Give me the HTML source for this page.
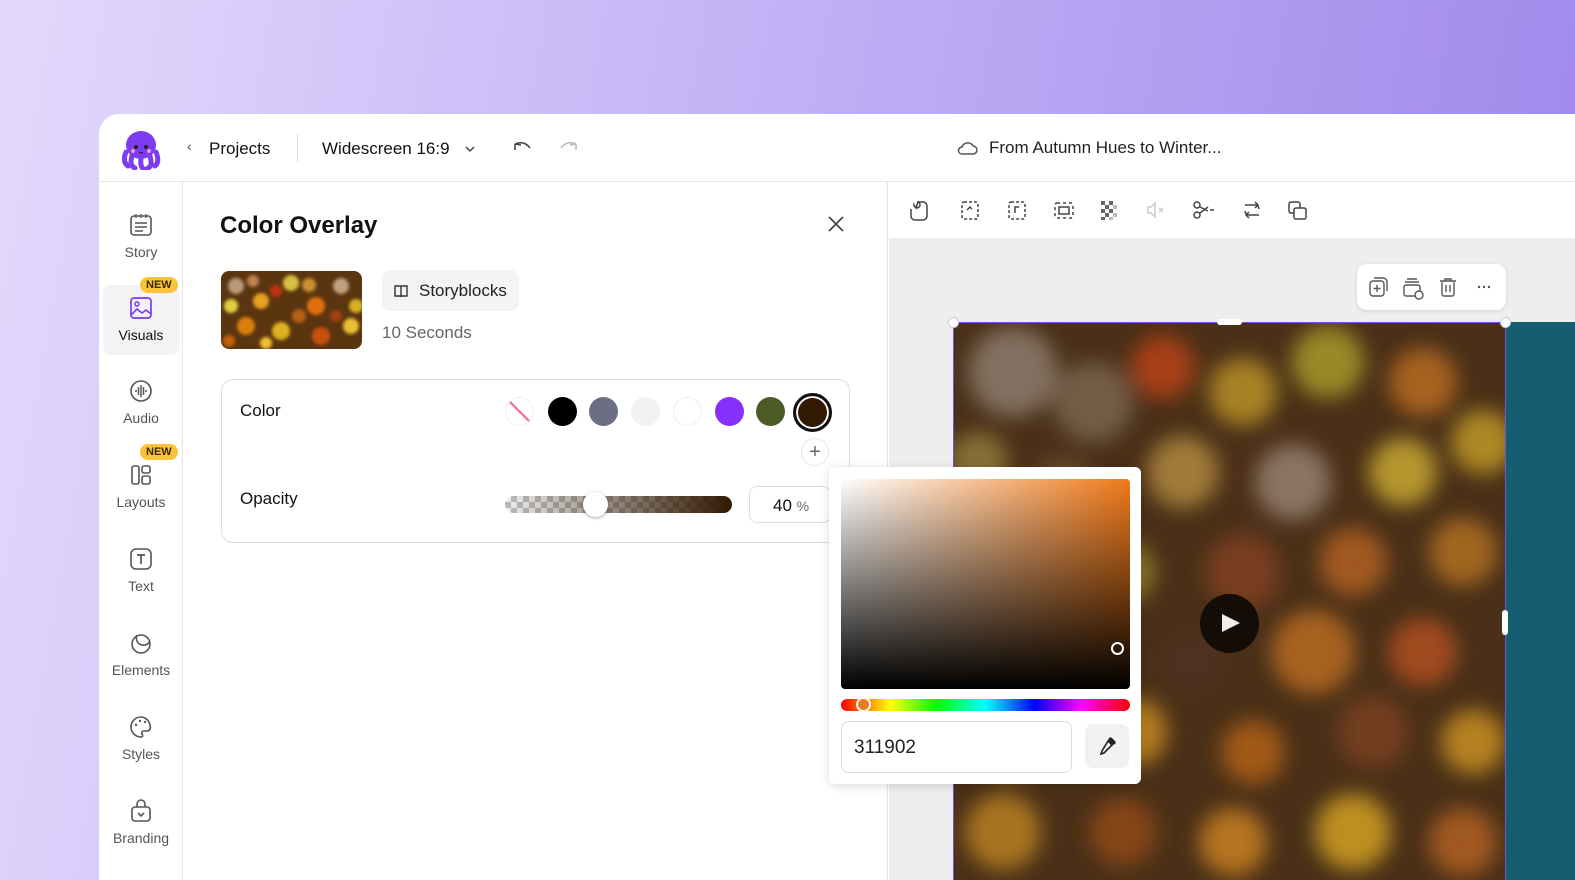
<!DOCTYPE html>
<html style="width:1575px;height:880px;overflow:hidden"><head><meta charset="utf-8"><style>
*{box-sizing:border-box;margin:0;padding:0}
body{width:1575px;height:880px;overflow:hidden;font-family:"Liberation Sans",sans-serif;background:linear-gradient(100deg,#e3d9fc 0%,#c6b6f6 40%,#9c84ea 100%);position:relative;color:#111}
.app{position:absolute;left:99px;top:114px;width:1476px;height:766px;background:#fff;border-radius:20px 0 0 0;overflow:hidden}
.hdr{position:absolute;left:0;top:0;right:0;height:68px;border-bottom:1px solid #e6e6e6}
.side{position:absolute;left:0;top:68px;width:84px;bottom:0;border-right:1px solid #e8e8e8}
.nav{position:absolute;left:4px;width:76px;text-align:center;font-size:14px;color:#555}
.nav svg{display:block;margin:0 auto 6px}
.new{position:absolute;background:#fbc33a;color:#3a2a00;font-size:11px;font-weight:bold;border-radius:9px;padding:2px 6px}
.abs{position:absolute}
.sw{position:absolute;top:397px;width:29px;height:29px;border-radius:50%}
</style></head><body>
<div class="app">
 <div class="hdr">
  <svg class="abs" style="left:21px;top:14px" width="42" height="42" viewBox="0 0 42 42"><ellipse cx="21" cy="17" rx="15" ry="14" fill="#7d3cf0"/><path d="M6 24 Q2 34 8 38 M12 28 Q9 38 15 40 M21 30 Q20 40 24 41 M30 28 Q33 38 28 40 M36 24 Q40 34 35 38" stroke="#7d3cf0" stroke-width="5" fill="none" stroke-linecap="round"/><circle cx="16" cy="19" r="2" fill="#222"/><circle cx="26" cy="19" r="2" fill="#222"/><circle cx="13" cy="23" r="2" fill="#f09ac0"/><circle cx="29" cy="23" r="2" fill="#f09ac0"/><path d="M19 24 q2 2 4 0" stroke="#222" fill="none"/></svg>
  <div class="abs" style="left:88px;top:24px;font-size:14px;color:#444">‹</div>
  <div class="abs" style="left:110px;top:25px;font-size:17px;font-weight:500">Projects</div>
  <div class="abs" style="left:198px;top:20px;width:1px;height:28px;background:#ddd"></div>
  <div class="abs" style="left:223px;top:25px;font-size:17px;font-weight:500">Widescreen 16:9</div>
  <svg class="abs" style="left:365px;top:29px" width="12" height="12"><path d="M2 4l4 4 4-4" stroke="#444" fill="none" stroke-width="1.5"/></svg>
  <svg class="abs" style="left:411px;top:24px" width="24" height="20"><path d="M5 6 Q14 2 20 10 M5 6 l0 6 M5 6 l6 1" stroke="#444" stroke-width="1.6" fill="none"/></svg>
  <svg class="abs" style="left:458px;top:24px" width="24" height="20"><path d="M19 6 Q10 2 4 10 M19 6 l0 6 M19 6 l-6 1" stroke="#bbb" stroke-width="1.6" fill="none"/></svg>
  <svg class="abs" style="left:857px;top:25px" width="22" height="18"><path d="M6 15 h11 a4 4 0 0 0 0-8 a6 6 0 0 0-11 1 a3.5 3.5 0 0 0 0 7z" stroke="#555" stroke-width="1.5" fill="none"/></svg>
  <div class="abs" style="left:890px;top:24px;font-size:17px;color:#222">From Autumn Hues to Winter...</div>
 </div>
 <div class="side">
  <div class="nav" style="top:30px"><svg width="26" height="26" viewBox="0 0 26 26"><rect x="3" y="4" width="20" height="19" rx="3" stroke="#555" stroke-width="1.6" fill="none"/><path d="M8 2v4M13 2v4M18 2v4M7 11h12M7 15h12M7 19h8" stroke="#555" stroke-width="1.4"/></svg>Story</div>
  <div class="nav" style="top:103px;height:70px;background:#f3f3f5;border-radius:8px;padding-top:10px;color:#111"><svg width="26" height="26" viewBox="0 0 26 26"><rect x="3" y="3" width="20" height="20" rx="3" stroke="#7d3cf0" stroke-width="1.7" fill="none"/><circle cx="9" cy="9" r="2" stroke="#7d3cf0" fill="none" stroke-width="1.5"/><path d="M3 20l6-6 5 4 4-3 5 4" stroke="#7d3cf0" stroke-width="1.6" fill="none"/></svg>Visuals</div>
  <div class="new" style="left:41px;top:95px">NEW</div>
  <div class="nav" style="top:196px"><svg width="26" height="26" viewBox="0 0 26 26"><circle cx="13" cy="13" r="10" stroke="#555" stroke-width="1.6" fill="none"/><path d="M8 12v2M10.5 9v8M13 7v12M15.5 9v8M18 12v2" stroke="#555" stroke-width="1.5"/></svg>Audio</div>
  <div class="new" style="left:41px;top:262px">NEW</div>
  <div class="nav" style="top:280px"><svg width="26" height="26" viewBox="0 0 26 26"><rect x="4" y="4" width="7" height="18" rx="2" stroke="#555" stroke-width="1.6" fill="none"/><rect x="14" y="4" width="8" height="7" rx="2" stroke="#555" stroke-width="1.6" fill="none"/><rect x="14" y="14" width="8" height="8" rx="2" stroke="#555" stroke-width="1.6" fill="none"/></svg>Layouts</div>
  <div class="nav" style="top:364px"><svg width="26" height="26" viewBox="0 0 26 26"><rect x="3" y="3" width="20" height="20" rx="5" stroke="#555" stroke-width="1.6" fill="none"/><path d="M9 9h8M13 9v9" stroke="#555" stroke-width="1.7"/></svg>Text</div>
  <div class="nav" style="top:448px"><svg width="26" height="26" viewBox="0 0 26 26"><circle cx="13" cy="14" r="9" stroke="#555" stroke-width="1.6" fill="none"/><path d="M9 5 a7 7 0 0 0 13 6" stroke="#555" stroke-width="1.6" fill="none"/></svg>Elements</div>
  <div class="nav" style="top:532px"><svg width="26" height="26" viewBox="0 0 26 26"><path d="M13 3a10 10 0 1 0 0 20c2 0 2-2 1-3s0-3 2-3h3c3 0 4-3 3-6C21 6 17 3 13 3z" stroke="#555" stroke-width="1.6" fill="none"/><circle cx="8" cy="11" r="1.2" fill="#555"/><circle cx="12" cy="7" r="1.2" fill="#555"/><circle cx="17" cy="8" r="1.2" fill="#555"/></svg>Styles</div>
  <div class="nav" style="top:616px"><svg width="26" height="26" viewBox="0 0 26 26"><rect x="4" y="9" width="18" height="14" rx="3" stroke="#555" stroke-width="1.6" fill="none"/><path d="M9 9V6a4 4 0 0 1 8 0v3M10 15l3 3 3-3" stroke="#555" stroke-width="1.6" fill="none"/></svg>Branding</div>
 </div>
 <div class="abs" style="left:84px;top:68px;width:705px;bottom:0;border-right:1px solid #e6e6e6"></div>
</div>
<div class="abs" style="left:220px;top:212px;font-size:24px;font-weight:bold">Color Overlay</div>
<svg class="abs" style="left:826px;top:214px" width="20" height="20"><path d="M3 3l14 14M17 3L3 17" stroke="#444" stroke-width="1.7"/></svg>
<svg class="abs" style="left:221px;top:271px;border-radius:8px" width="141" height="78" viewBox="0 0 141 78"><defs><filter id="b2"><feGaussianBlur stdDeviation="1.5"/></filter></defs><rect width="141" height="78" fill="#5a3510"/><g filter="url(#b2)"><circle cx="15" cy="15" r="8" fill="#b89a7a"/><circle cx="32" cy="10" r="6" fill="#c08050"/><circle cx="40" cy="30" r="8" fill="#e8a020"/><circle cx="70" cy="12" r="8" fill="#d8c040"/><circle cx="55" cy="20" r="6" fill="#c03010"/><circle cx="95" cy="35" r="9" fill="#e07010"/><circle cx="88" cy="14" r="7" fill="#c89030"/><circle cx="120" cy="15" r="8" fill="#c0a080"/><circle cx="135" cy="35" r="7" fill="#d8b020"/><circle cx="25" cy="55" r="9" fill="#d88010"/><circle cx="60" cy="60" r="9" fill="#e0b020"/><circle cx="78" cy="45" r="7" fill="#b86018"/><circle cx="100" cy="65" r="9" fill="#c85010"/><circle cx="130" cy="55" r="8" fill="#e8c030"/><circle cx="115" cy="45" r="6" fill="#a04010"/><circle cx="10" cy="35" r="7" fill="#e0d040"/><circle cx="45" cy="72" r="6" fill="#f0c030"/><circle cx="8" cy="70" r="6" fill="#c06010"/></g></svg>
<div class="abs" style="left:382px;top:270px;width:137px;height:41px;background:#f4f4f4;border-radius:8px"></div>
<svg class="abs" style="left:393px;top:283px" width="16" height="16"><path d="M2 3h5a1 1 0 0 1 1 1v10a1 1 0 0 0-1-1H2zM14 3H9a1 1 0 0 0-1 1v10a1 1 0 0 1 1-1h5z" stroke="#333" stroke-width="1.4" fill="none"/></svg>
<div class="abs" style="left:419px;top:281px;font-size:17px;color:#222">Storyblocks</div>
<div class="abs" style="left:382px;top:323px;font-size:17px;color:#666">10 Seconds</div>
<div class="abs" style="left:221px;top:379px;width:629px;height:164px;border:1px solid #ddd;border-radius:12px"></div>
<div class="abs" style="left:240px;top:401px;font-size:17px">Color</div>
<div class="abs" style="left:240px;top:489px;font-size:17px">Opacity</div>
<div class="sw" style="left:505px;border:1px solid #eee;background:linear-gradient(45deg,#fff 47%,#f07a9a 47%,#f07a9a 53%,#fff 53%)"></div>
<div class="sw" style="left:548px;background:#000"></div>
<div class="sw" style="left:589px;background:#6c6e84"></div>
<div class="sw" style="left:631px;background:#f2f1f4"></div>
<div class="sw" style="left:673px;background:#fff;border:1px solid #eee"></div>
<div class="sw" style="left:715px;background:#8830fb"></div>
<div class="sw" style="left:756px;background:#4d5a26"></div>
<div class="abs" style="left:793px;top:393px;width:39px;height:39px;border-radius:50%;border:3px solid #111;background:#311902;box-shadow:inset 0 0 0 2px #fff"></div>
<div class="abs" style="left:801px;top:438px;width:28px;height:28px;border-radius:50%;border:1px solid #e6e6e6;text-align:center;line-height:26px;font-size:20px;color:#666">+</div>
<div class="abs" style="left:505px;top:496px;width:227px;height:17px;border-radius:9px;background:linear-gradient(90deg,rgba(49,25,2,0),#311902),repeating-conic-gradient(#bbb 0 25%,#eee 0 50%) 0 0/12px 12px"></div>
<div class="abs" style="left:583px;top:492px;width:25px;height:25px;border-radius:50%;background:#fff;box-shadow:0 1px 3px rgba(0,0,0,.35)"></div>
<div class="abs" style="left:749px;top:486px;width:82px;height:37px;border:1px solid #ddd;border-radius:8px;font-size:17px;padding:9px 0 0 23px">40 <span style="font-size:14px;color:#666">%</span></div>
<div class="abs" style="left:889px;top:182px;width:686px;height:56px;background:#fff"></div>
<div class="abs" style="left:889px;top:238px;width:686px;height:642px;background:#eeeeee"></div>
<svg class="abs" style="left:905px;top:196px" width="420" height="28" viewBox="0 0 420 28" fill="none" stroke="#444" stroke-width="1.5">
<path d="M12 6h6a4 4 0 0 1 4 4v10a4 4 0 0 1-4 4h-8a4 4 0 0 1-4-4v-7"/><path d="M13 6a3 3 0 1 1-4 3l2 3z"/>
<rect x="57" y="6" width="16" height="17" rx="2" stroke-dasharray="3 2"/><path d="M62 14l3-3 2 2"/>
<rect x="104" y="6" width="16" height="17" rx="2" stroke-dasharray="3 2"/><path d="M110 17v-6h4"/>
<rect x="150" y="7" width="18" height="15" rx="2" stroke-dasharray="3 3"/><rect x="154" y="11" width="10" height="7"/>
<g fill="#666" stroke="none"><rect x="196" y="5" width="4" height="4"/><rect x="204" y="5" width="4" height="4"/><rect x="200" y="9" width="4" height="4"/><rect x="208" y="9" width="4" height="4" fill="#bbb"/><rect x="196" y="13" width="4" height="4"/><rect x="204" y="13" width="4" height="4"/><rect x="200" y="17" width="4" height="4"/><rect x="208" y="17" width="4" height="4" fill="#bbb"/><rect x="196" y="21" width="4" height="3"/><rect x="204" y="21" width="4" height="3" fill="#bbb"/></g>
<path d="M243 11h3l4-4v14l-4-4h-3z M254 12l4 4M258 12l-4 4" stroke="#ccc"/>
<circle cx="292" cy="9" r="3"/><circle cx="292" cy="19" r="3"/><path d="M295 11l8 4M295 17l8-6M305 14h4"/>
<path d="M340 9h10a4 4 0 0 1 4 4M350 6l3 3-3 3M354 19h-10a4 4 0 0 1-4-4M344 22l-3-3 3-3"/>
<rect x="384" y="6" width="11" height="11" rx="2"/><rect x="389" y="12" width="12" height="11" rx="2" fill="#fff"/>
</svg>
<div class="abs" style="left:1357px;top:264px;width:149px;height:46px;background:#fff;border-radius:10px;box-shadow:0 1px 4px rgba(0,0,0,.12)"></div>
<svg class="abs" style="left:1367px;top:274px" width="130" height="26" fill="none" stroke="#555" stroke-width="1.4"><rect x="3" y="7" width="14" height="15" rx="3"/><path d="M7 4h9a4 4 0 0 1 4 4v9M10 11v7M6.5 14.5h7"/><path d="M40 5h10M38 8h14"/><rect x="37" y="11" width="16" height="11" rx="2"/><circle cx="52" cy="21" r="4" fill="#fff"/><path d="M73 7h16M78 7V5h6v2M75 8v12a2 2 0 0 0 2 2h8a2 2 0 0 0 2-2V8M79 11v7M83 11v7"/><g fill="#555" stroke="none"><circle cx="112" cy="13" r="1.2"/><circle cx="117" cy="13" r="1.2"/><circle cx="122" cy="13" r="1.2"/></g></svg>
<div class="abs" style="left:1506px;top:322px;width:69px;height:558px;background:#155d70"></div>
<svg class="abs" style="left:953px;top:322px" width="553" height="558" viewBox="0 0 553 558"><defs><filter id="b"><feGaussianBlur stdDeviation="10"/></filter></defs><rect width="553" height="558" fill="#4a3018"/><g filter="url(#b)" opacity=".85">
<circle cx="60" cy="50" r="45" fill="#8d7a6c"/><circle cx="140" cy="80" r="40" fill="#7c6550"/><circle cx="210" cy="45" r="32" fill="#b84218"/><circle cx="290" cy="70" r="34" fill="#b89028"/><circle cx="375" cy="40" r="36" fill="#a89a2a"/><circle cx="470" cy="60" r="34" fill="#b86a20"/><circle cx="530" cy="120" r="32" fill="#c09828"/><circle cx="25" cy="140" r="30" fill="#907a3a"/><circle cx="110" cy="170" r="35" fill="#6a5030"/><circle cx="230" cy="150" r="36" fill="#b08840"/><circle cx="340" cy="160" r="38" fill="#988070"/><circle cx="450" cy="150" r="34" fill="#c8a830"/><circle cx="60" cy="240" r="34" fill="#8a6028"/><circle cx="170" cy="250" r="32" fill="#98802a"/><circle cx="290" cy="250" r="38" fill="#804020"/><circle cx="400" cy="240" r="34" fill="#b06020"/><circle cx="510" cy="230" r="34" fill="#b07020"/><circle cx="30" cy="330" r="30" fill="#604020"/><circle cx="110" cy="330" r="34" fill="#986020"/><circle cx="240" cy="340" r="32" fill="#503020"/><circle cx="360" cy="330" r="42" fill="#b86a20"/><circle cx="470" cy="330" r="34" fill="#b05020"/><circle cx="60" cy="420" r="34" fill="#b88020"/><circle cx="180" cy="410" r="34" fill="#c88a20"/><circle cx="300" cy="430" r="32" fill="#b06018"/><circle cx="420" cy="410" r="36" fill="#7a4020"/><circle cx="520" cy="420" r="32" fill="#c89020"/><circle cx="50" cy="510" r="38" fill="#b88020"/><circle cx="170" cy="510" r="34" fill="#904a18"/><circle cx="280" cy="520" r="34" fill="#c88020"/><circle cx="400" cy="510" r="38" fill="#d0a020"/><circle cx="510" cy="520" r="34" fill="#b06020"/></g>
<rect x="0.5" y="0.5" width="552" height="560" fill="none" stroke="#7b4fd8"/></svg>
<div class="abs" style="left:948px;top:317px;width:11px;height:11px;border-radius:50%;background:#fff;border:1px solid #ccc"></div>
<div class="abs" style="left:1500px;top:317px;width:11px;height:11px;border-radius:50%;background:#fff;border:1px solid #ccc"></div>
<div class="abs" style="left:1217px;top:319px;width:25px;height:6px;border-radius:3px;background:#fff"></div>
<div class="abs" style="left:1502px;top:610px;width:6px;height:25px;border-radius:3px;background:#fff"></div>
<div class="abs" style="left:1200px;top:594px;width:59px;height:59px;border-radius:50%;background:#140c06"></div>
<svg class="abs" style="left:1220px;top:612px" width="22" height="22"><path d="M2 2L20 11 2 20z" fill="#eee"/></svg>
<div class="abs" style="left:829px;top:467px;width:312px;height:317px;background:#fff;border-radius:6px;box-shadow:0 2px 10px rgba(0,0,0,.15)"></div>
<div class="abs" style="left:841px;top:479px;width:289px;height:210px;border-radius:4px;background:linear-gradient(to top,#000,rgba(0,0,0,0)),linear-gradient(to right,#fff,#f07a1a)"></div>
<div class="abs" style="left:1111px;top:642px;width:13px;height:13px;border-radius:50%;border:2px solid #fff"></div>
<div class="abs" style="left:841px;top:699px;width:289px;height:12px;border-radius:6px;background:linear-gradient(90deg,#f00,#ff0 17%,#0f0 33%,#0ff 50%,#00f 67%,#f0f 83%,#f00)"></div>
<div class="abs" style="left:856px;top:697px;width:15px;height:15px;border-radius:50%;background:#f07a1a;border:2px solid #fff"></div>
<div class="abs" style="left:841px;top:721px;width:231px;height:52px;border:1px solid #ddd;border-radius:8px;font-size:19px;padding:15px 0 0 12px;color:#222">311902</div>
<div class="abs" style="left:1085px;top:724px;width:44px;height:44px;border-radius:8px;background:#f1f1f1"></div>
<svg class="abs" style="left:1096px;top:735px" width="22" height="22"><path d="M14 4l4 4M12 6l4 4-8 8-3 1 1-3z" stroke="#222" stroke-width="1.6" fill="none"/><path d="M13 3a2 2 0 0 1 3 0l3 3a2 2 0 0 1 0 3l-2 1-5-5z" fill="#222"/></svg>
</body></html>
